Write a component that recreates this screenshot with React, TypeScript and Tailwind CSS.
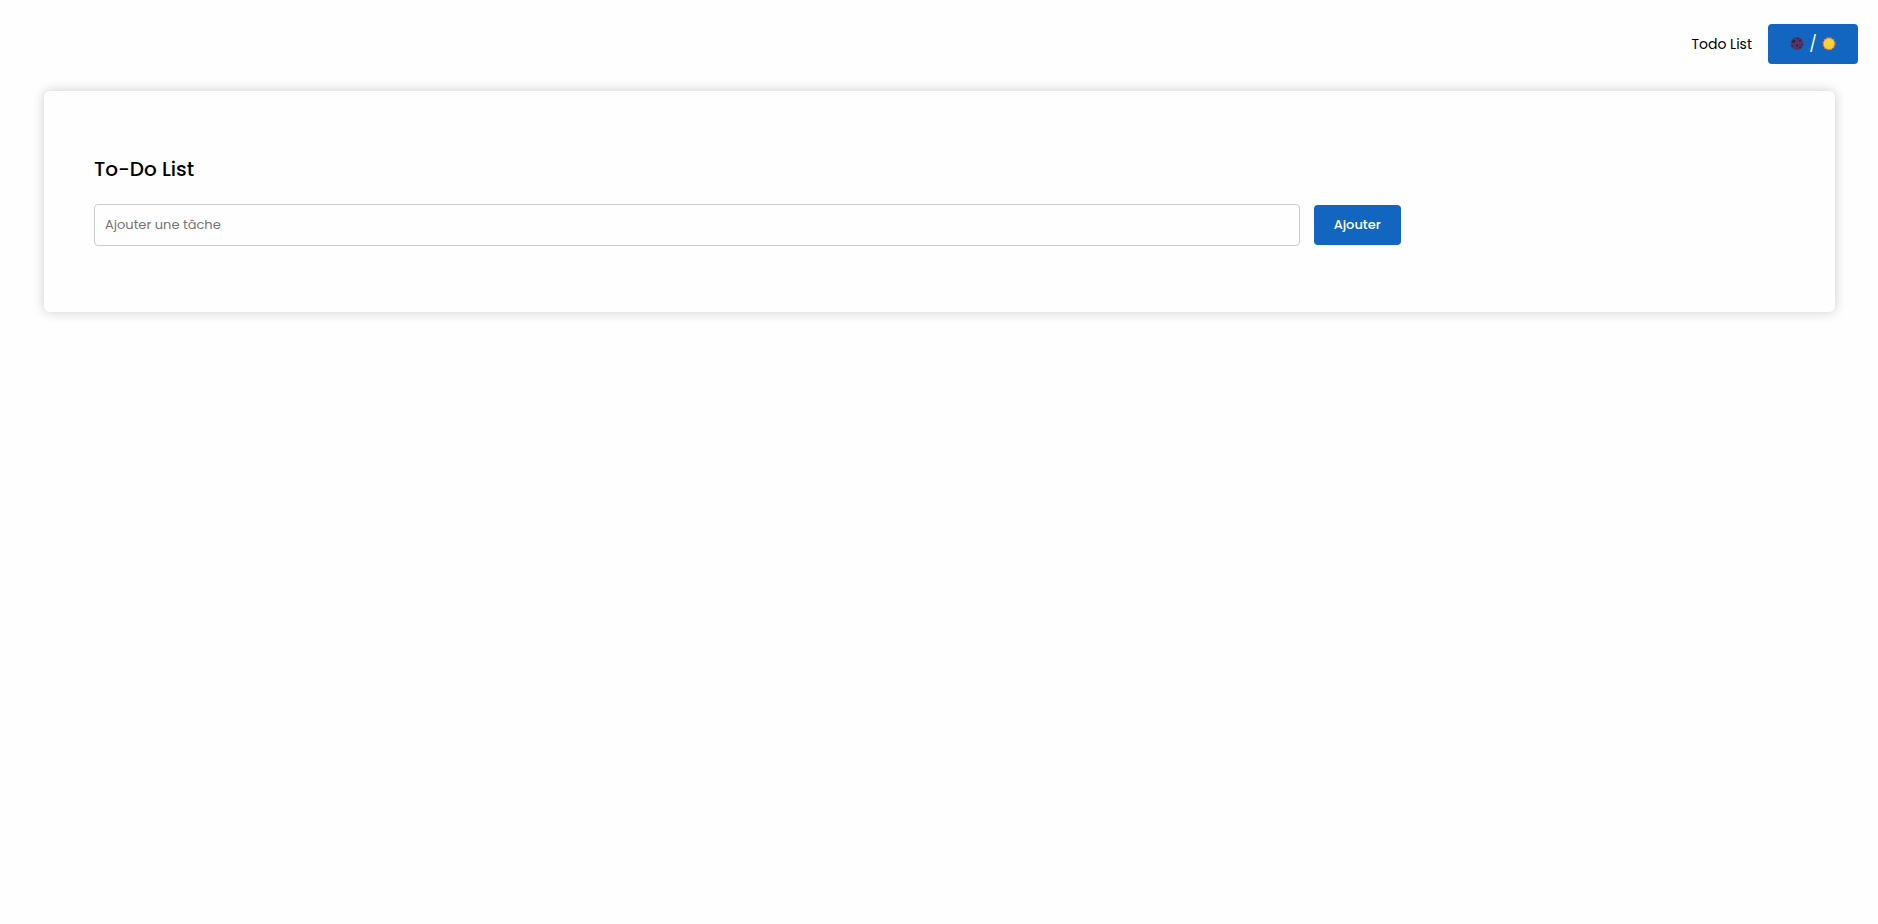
import { useState } from "react";

function MoonIcon() {
  return (
    <svg width="14" height="14" viewBox="0 0 14 14" aria-hidden="true">
      <circle cx="7" cy="6.5" r="6.5" fill="#533566" />
      <g fill="#321b41">
        <circle cx="3.8" cy="4.2" r="1.5" />
        <circle cx="7.6" cy="1.5" r="0.8" />
        <circle cx="10" cy="3.6" r="1" />
        <circle cx="7.2" cy="8.4" r="1" />
        <circle cx="11.8" cy="8" r="0.7" />
        <circle cx="2.2" cy="9" r="0.8" />
        <circle cx="10" cy="10.6" r="0.9" />
      </g>
    </svg>
  );
}

function SunIcon() {
  return (
    <svg width="14" height="14" viewBox="0 0 14 14" aria-hidden="true">
      <circle cx="7" cy="6.7" r="6" fill="#f8903a" />
      <circle
        cx="7"
        cy="6.7"
        r="6.1"
        fill="none"
        stroke="#f07a35"
        strokeWidth="1.2"
        strokeDasharray="1.6 1.6"
      />
      <circle cx="7" cy="6.7" r="5.2" fill="#ffd139" />
    </svg>
  );
}

export default function App() {
  const [dark, setDark] = useState(false);
  const [task, setTask] = useState("");
  const [tasks, setTasks] = useState<string[]>([]);

  const handleSubmit = (e: any) => {
    e.preventDefault();
    if (!task.trim()) return;
    setTasks([...tasks, task.trim()]);
    setTask("");
  };

  return (
    <div
      className={`min-h-screen font-['Poppins','Inter',sans-serif] text-sm ${
        dark ? "bg-[#222222] text-white" : "bg-[#fefefe] text-black"
      }`}
    >
      <nav className="flex items-center justify-end gap-4 px-5 pt-6">
        <a href="#todo">Todo List</a>
        <button
          type="button"
          aria-label="Thème sombre / clair"
          onClick={() => setDark(!dark)}
          className="flex h-10 w-[90px] items-center justify-center gap-1 rounded bg-[#1266bf] text-base text-white"
        >
          <MoonIcon />
          <span className="px-px">/</span>
          <SunIcon />
        </button>
      </nav>

      <main
        id="todo"
        className="ml-11 mr-[43px] mt-[27px] rounded-md px-[50px] pt-16 pb-[66px] shadow-[0_0_12px_rgba(0,0,0,0.2)]"
      >
        <h1 className="mb-[21px] text-xl font-medium">To-Do List</h1>
        <form onSubmit={handleSubmit} className="flex items-center gap-3.5">
          <input
            type="text"
            aria-label="Ajouter une tâche"
            placeholder="Ajouter une tâche"
            value={task}
            onChange={(e) => setTask(e.target.value)}
            className="h-[42px] w-[71.3%] rounded border border-[#cccccc] px-2.5 text-[13px] placeholder:text-[#757575]"
          />
          <button
            type="submit"
            className="h-10 w-[87px] rounded bg-[#1266bf] text-[13px] font-medium text-white"
          >
            Ajouter
          </button>
        </form>
        {tasks.length > 0 && (
          <ul className="mt-5 space-y-2">
            {tasks.map((t, idx) => (
              <li key={idx}>{t}</li>
            ))}
          </ul>
        )}
      </main>
    </div>
  );
}
